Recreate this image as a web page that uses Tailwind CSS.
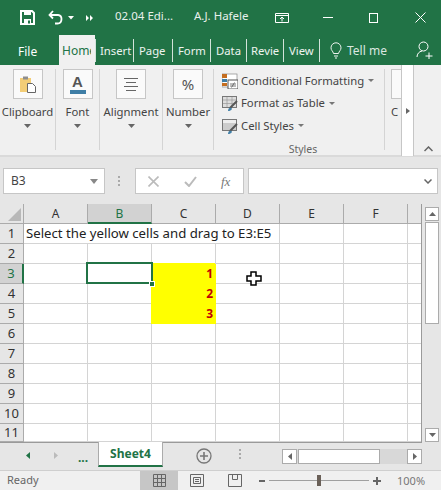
<!DOCTYPE html>
<html><head><meta charset="utf-8"><script src="https://cdn.jsdelivr.net/npm/@tailwindcss/browser@4"></script></head>
<body class="m-0 overflow-hidden">
<div class="relative w-[441px] h-[490px] overflow-hidden bg-[#e6e6e6] flex flex-col font-['Noto_Sans',sans-serif] text-[12px] leading-none text-[#444]">

<!-- title bar -->
<div class="h-[35px] bg-[#217346] text-white flex items-center shrink-0 relative">
  <svg class="ml-[20px] mt-[-1px]" width="15" height="15" viewBox="0 0 15 15"><path d="M1 1h11l2 2v11H1z" fill="none" stroke="#fff" stroke-width="2"/><rect x="4" y="1" width="7" height="4" fill="#fff"/><rect x="4" y="9" width="7" height="5" fill="#fff"/><rect x="8" y="10.5" width="2" height="3" fill="#217346"/></svg>
  <svg class="ml-[13px] mt-[-1px]" width="16" height="15" viewBox="0 0 16 15"><path d="M5 1 1.500 5 5 8.500M2 5h8a4 4 0 0 1 3.500 4c0 3-2 4.500-4 4.500H7" fill="none" stroke="#fff" stroke-width="1.800"/></svg>
  <svg class="ml-[4px]" width="6" height="4" viewBox="0 0 6 4"><path d="M0 0h6L3 3.500z" fill="#fff"/></svg>
  <svg class="ml-[12px]" width="8" height="6" viewBox="0 0 8 6"><path d="M0 0l3 3-3 3zM4 0l3 3-3 3z" fill="#fff"/></svg>
  <span class="ml-[21px] w-[79px] whitespace-nowrap text-[11.5px] text-[#e8f0eb] mt-[-3px]">02.04 Edi...</span>
  <span class="w-[81px] whitespace-nowrap text-[11.5px] text-[#e8f0eb] mt-[-3px]">A.J. Hafele</span>
  <svg width="14" height="10" viewBox="0 0 14 10"><path d="M.5.500h13v9H.5zM.5 2.500h13M7 8.500V4M5 6l2-2 2 2" fill="none" stroke="#fff"/></svg>
  <div class="ml-[34px] w-[10px] h-px bg-white"></div>
  <div class="ml-[36px] w-[9px] h-[10px] border border-white"></div>
  <svg class="ml-[37px]" width="11" height="11" viewBox="0 0 11 11"><path d="M.5.500l10 10M10.500.500l-10 10" stroke="#fff" fill="none"/></svg>
</div>

<!-- tabs -->
<div class="h-[30px] bg-[#217346] text-[#eef4f0] flex items-center shrink-0 relative text-[11.3px]">
  <span class="ml-[18px] w-[41px] text-white pt-[3px] text-[12px]">File</span>
  <div class="w-[36px] h-[30px] bg-[#f0f0f0] text-[#217346] pl-[3px] pt-[10px] text-[12px]"><div class="w-[29px] overflow-hidden whitespace-nowrap">Home</div></div>
  <div class="w-px h-[23px] bg-white/80"></div>
  <span class="w-[37px] pl-[4px] pt-[1px] whitespace-nowrap">Insert</span>
  <div class="w-px h-[23px] bg-white/80"></div>
  <span class="w-[38px] pl-[5px] pt-[1px] whitespace-nowrap">Page</span>
  <div class="w-px h-[23px] bg-white/80"></div>
  <span class="w-[37px] pl-[5px] pt-[1px] whitespace-nowrap">Form</span>
  <div class="w-px h-[23px] bg-white/80"></div>
  <span class="w-[35px] pl-[5px] pt-[1px] whitespace-nowrap">Data</span>
  <div class="w-px h-[23px] bg-white/80"></div>
  <span class="w-[36px] pl-[4px] pt-[1px] whitespace-nowrap">Revie</span>
  <div class="w-px h-[23px] bg-white/80"></div>
  <span class="w-[35px] pl-[5px] pt-[1px] whitespace-nowrap">View</span>
  <div class="w-px h-[23px] bg-white/80"></div>
  <svg class="ml-[10px]" width="12" height="17" viewBox="0 0 12 17"><path d="M3.500 11.500C3 9 1 8.500 1 5.800a5 5 0 0 1 10 0C11 8.500 9 9 8.500 11.500zM4 14h4M5 16h2" fill="none" stroke="#eef4f0"/></svg>
  <span class="ml-[5px] pt-[1px] whitespace-nowrap text-[#dbe7e0] text-[12px]">Tell me</span>
  <svg class="absolute left-[416px] top-[6px]" width="18" height="18" viewBox="0 0 18 18"><circle cx="7.500" cy="5.500" r="4.500" fill="none" stroke="#fff"/><path d="M1 16c0-3 2-5.500 5-6M9.500 15h7M13 11.500v7" fill="none" stroke="#fff"/></svg>
</div>

<!-- ribbon -->
<div class="h-[92px] bg-[#f0f0f0] border-b-2 border-[#dadada] shrink-0 flex relative text-[11.3px]">
  <div class="w-[56px] border-r border-[#d4d4d4] mt-[4px] mb-[5px] flex flex-col items-center">
    <div class="w-[30px] h-[30px] border border-[#c6c6c6] bg-[#fafafa] flex items-center justify-center">
      <svg width="16" height="17" viewBox="0 0 16 17"><path d="M0 2h11v14H0z" fill="#f3cd76"/><rect x="3" y="0.500" width="5" height="3" fill="#8e8e8e"/><path d="M7.500 7.500h5l3 3v6h-8z" fill="#fff" stroke="#666"/></svg>
    </div>
    <span class="mt-[7px] text-[#444] whitespace-nowrap">Clipboard</span>
    <svg class="mt-[7px]" width="7" height="4" viewBox="0 0 7 4"><path d="M0 0h7L3.500 4z" fill="#666"/></svg>
  </div>
  <div class="w-[44px] border-r border-[#d4d4d4] mt-[4px] mb-[5px] flex flex-col items-center">
    <div class="w-[30px] h-[30px] border border-[#c6c6c6] bg-[#fafafa] flex flex-col items-center">
      <span class="font-['Liberation_Sans',sans-serif] font-bold text-[15px] text-[#555] mt-[5px] leading-[14px]">A</span>
      <div class="w-[16px] h-[4px] bg-[#3f7ea6] mt-[1px]"></div>
    </div>
    <span class="mt-[7px]">Font</span>
    <svg class="mt-[7px]" width="7" height="4" viewBox="0 0 7 4"><path d="M0 0h7L3.500 4z" fill="#666"/></svg>
  </div>
  <div class="w-[63px] border-r border-[#d4d4d4] mt-[4px] mb-[5px] flex flex-col items-center">
    <div class="w-[30px] h-[30px] border border-[#c6c6c6] bg-[#fafafa] flex flex-col items-center justify-center gap-[3px]">
      <div class="w-[14px] h-px bg-[#666]"></div><div class="w-[10px] h-px bg-[#666]"></div><div class="w-[14px] h-px bg-[#666]"></div><div class="w-[10px] h-px bg-[#666]"></div>
    </div>
    <span class="mt-[7px]">Alignment</span>
    <svg class="mt-[7px]" width="7" height="4" viewBox="0 0 7 4"><path d="M0 0h7L3.500 4z" fill="#666"/></svg>
  </div>
  <div class="w-[51px] border-r border-[#d4d4d4] mt-[4px] mb-[5px] flex flex-col items-center">
    <div class="w-[30px] h-[30px] border border-[#c6c6c6] bg-[#fafafa] flex items-center justify-center">
      <span class="text-[15px] text-[#555]">%</span>
    </div>
    <span class="mt-[7px]">Number</span>
    <svg class="mt-[7px]" width="7" height="4" viewBox="0 0 7 4"><path d="M0 0h7L3.500 4z" fill="#666"/></svg>
  </div>
  <div class="w-[171px] border-r border-[#d4d4d4] mt-[4px] mb-[5px] flex flex-col pl-[8px]">
    <div class="flex items-center h-[23px] shrink-0">
      <svg width="16" height="16" viewBox="0 0 16 16"><rect x="0" y="1" width="15" height="13" fill="#fff" stroke="#888" stroke-width=".7"/><rect x="0" y="1" width="5" height="4" fill="#c46d1f"/><rect x="0" y="6" width="5" height="3" fill="#3f7ea6"/><rect x="0" y="10" width="5" height="3" fill="#c46d1f"/><rect x="6" y="7" width="10" height="9" fill="#fff" stroke="#555"/><path d="M8 11h6M8 13h6M12.500 9.500l-3 5" stroke="#555" stroke-width=".8"/></svg>
      <span class="ml-[3px] text-[#444] whitespace-nowrap">Conditional Formatting</span>
      <svg class="ml-[4px]" width="6" height="3" viewBox="0 0 6 3"><path d="M0 0h6L3 3z" fill="#777"/></svg>
    </div>
    <div class="flex items-center h-[22px] shrink-0">
      <svg width="16" height="16" viewBox="0 0 16 16"><rect x=".5" y="1.500" width="14" height="11" fill="#ddd" stroke="#777"/><path d="M5 2v10M10 2v10M1 5h13M1 8.500h13" stroke="#999" stroke-width=".7"/><path d="M15 6 8 13" stroke="#555" stroke-width="2"/><path d="M6 16c0-3 2-4 3.500-3 1 1-.5 3-3.500 3z" fill="#3f7ea6"/></svg>
      <span class="ml-[3px] whitespace-nowrap">Format as Table</span>
      <svg class="ml-[4px]" width="6" height="3" viewBox="0 0 6 3"><path d="M0 0h6L3 3z" fill="#777"/></svg>
    </div>
    <div class="flex items-center h-[23px] shrink-0">
      <svg width="16" height="16" viewBox="0 0 16 16"><rect x=".5" y="1.500" width="14" height="11" fill="#ccc" stroke="#777"/><rect x="1" y="2" width="13" height="3" fill="#eee"/><path d="M15 6 8 13" stroke="#555" stroke-width="2"/><path d="M6 16c0-3 2-4 3.500-3 1 1-.5 3-3.500 3z" fill="#3f7ea6"/></svg>
      <span class="ml-[3px] whitespace-nowrap">Cell Styles</span>
      <svg class="ml-[4px]" width="6" height="3" viewBox="0 0 6 3"><path d="M0 0h6L3 3z" fill="#777"/></svg>
    </div>
    <span class="self-center shrink-0 mt-[7px] text-[10.5px] text-[#666]">Styles</span>
  </div>
  <div class="w-[18px] mt-[4px] ml-[6px] flex flex-col overflow-hidden">
    <div class="w-[18px] h-[30px] border border-[#c6c6c6] bg-[#fafafa]"></div>
    <span class="mt-[7px]">C</span>
  </div>
  <div class="absolute left-[401px] top-0 w-[13px] h-[91px] bg-white border-x border-[#c6c6c6] flex items-center justify-center">
    <svg width="4" height="6" viewBox="0 0 4 6"><path d="M0 0l4 3-4 3z" fill="#666"/></svg>
  </div>
  <svg class="absolute left-[424px] top-[81px]" width="9" height="6" viewBox="0 0 9 6"><path d="M.5 5 4.500 1l4 4" fill="none" stroke="#666" stroke-width="1.500"/></svg>
</div>

<!-- formula bar -->
<div class="h-[47px] bg-[#e6e6e6] shrink-0 flex items-start pt-[11px] pl-[3px]">
  <div class="w-[102px] h-[26px] border border-[#c6c6c6] bg-white flex items-center pl-[7px] pr-[6px] justify-between text-[12px]">
    <span>B3</span>
    <svg width="8" height="5" viewBox="0 0 8 5"><path d="M0 0h8L4 5z" fill="#888"/></svg>
  </div>
  <div class="w-[15px] h-[26px] ml-[6px] mr-[9px] flex flex-col items-center justify-center gap-[2px]"><i class="block w-[2px] h-[2px] bg-[#aaa]"></i><i class="block w-[2px] h-[2px] bg-[#aaa]"></i><i class="block w-[2px] h-[2px] bg-[#aaa]"></i></div>
  <div class="w-[109px] h-[26px] border border-[#c6c6c6] bg-white flex items-center">
    <svg class="ml-[12px]" width="11" height="11" viewBox="0 0 11 11"><path d="M.5.500l10 10M10.500.500l-10 10" stroke="#bbb" stroke-width="1.600" fill="none"/></svg>
    <svg class="ml-[25px]" width="13" height="11" viewBox="0 0 13 11"><path d="M1 6l4 4 7-9" stroke="#bbb" stroke-width="2" fill="none"/></svg>
    <span class="ml-[24px] font-['Liberation_Serif',serif] italic text-[13px] text-[#777]">fx</span>
  </div>
  <div class="w-[190px] h-[26px] ml-[4px] border border-[#c6c6c6] bg-white flex items-center justify-end pr-[5px]">
    <svg width="8" height="5" viewBox="0 0 8 5"><path d="M.5.500 4 4 7.500.500" stroke="#666" stroke-width="1.500" fill="none"/></svg>
  </div>
</div>

<!-- grid area -->
<div class="h-[239px] shrink-0 flex relative">
  <div class="w-[422px] h-[239px] relative overflow-hidden border-r border-b border-[#9a9a9a]">
    <div class="grid grid-cols-[24px_repeat(6,64px)_13px] grid-rows-[20px_repeat(10,20px)_18px] bg-white text-[12px] text-[#333]">
      <!-- header -->
      <div class="bg-[#e6e6e6] border-r border-b border-[#ababab] flex items-end justify-end p-[2px]"><svg width="13" height="13" viewBox="0 0 13 13"><path d="M13 0v13H0z" fill="#b8b8b8"/></svg></div>
      <div class="bg-[#e6e6e6] border-r border-b border-[#ababab] flex items-center justify-center pt-[1px]">A</div>
      <div class="bg-[#d2d2d2] border-r border-b-2 border-b-[#217346] border-r-[#ababab] flex items-center justify-center text-[#217346] pt-[1px]">B</div>
      <div class="bg-[#e6e6e6] border-r border-b border-[#ababab] flex items-center justify-center pt-[1px]">C</div>
      <div class="bg-[#e6e6e6] border-r border-b border-[#ababab] flex items-center justify-center pt-[1px]">D</div>
      <div class="bg-[#e6e6e6] border-r border-b border-[#ababab] flex items-center justify-center pt-[1px]">E</div>
      <div class="bg-[#e6e6e6] border-r border-b border-[#ababab] flex items-center justify-center pt-[1px]">F</div>
      <div class="bg-[#e6e6e6] border-b border-[#ababab]"></div>
      <!-- rows -->
      <div class="contents [&>div]:border-r [&>div]:border-b [&>div]:border-[#d4d4d4]">
        <div class="bg-[#e6e6e6] !border-[#ababab] flex items-center justify-center text-[13px]">1</div><div class="!border-r-0 flex items-center pl-[2px] whitespace-nowrap text-[13.2px] text-[#222] overflow-visible">Select the yellow cells and drag to E3:E5</div><div class="!border-r-0"></div><div class="!border-r-0"></div><div></div><div></div><div></div><div class="!border-r-0"></div>
        <div class="bg-[#e6e6e6] !border-[#ababab] flex items-center justify-center text-[13px]">2</div><div></div><div></div><div></div><div></div><div></div><div></div><div class="!border-r-0"></div>
        <div class="bg-[#d2d2d2] !border-[#ababab] !border-r-2 !border-r-[#217346] flex items-center justify-center text-[13px] text-[#217346]">3</div><div></div><div></div><div class="bg-[#ffff00] !border-[#ffff00] shadow-[-1px_-1px_0_#ffff00] flex items-center justify-end pr-[2px] font-bold text-[#c00000]">1</div><div></div><div></div><div></div><div class="!border-r-0"></div>
        <div class="bg-[#e6e6e6] !border-[#ababab] flex items-center justify-center text-[13px]">4</div><div></div><div></div><div class="bg-[#ffff00] !border-[#ffff00] shadow-[-1px_0_0_#ffff00] flex items-center justify-end pr-[2px] font-bold text-[#c00000]">2</div><div></div><div></div><div></div><div class="!border-r-0"></div>
        <div class="bg-[#e6e6e6] !border-[#ababab] flex items-center justify-center text-[13px]">5</div><div></div><div></div><div class="bg-[#ffff00] !border-[#ffff00] shadow-[-1px_0_0_#ffff00] flex items-center justify-end pr-[2px] font-bold text-[#c00000]">3</div><div></div><div></div><div></div><div class="!border-r-0"></div>
        <div class="bg-[#e6e6e6] !border-[#ababab] flex items-center justify-center text-[13px]">6</div><div></div><div></div><div></div><div></div><div></div><div></div><div class="!border-r-0"></div>
        <div class="bg-[#e6e6e6] !border-[#ababab] flex items-center justify-center text-[13px]">7</div><div></div><div></div><div></div><div></div><div></div><div></div><div class="!border-r-0"></div>
        <div class="bg-[#e6e6e6] !border-[#ababab] flex items-center justify-center text-[13px]">8</div><div></div><div></div><div></div><div></div><div></div><div></div><div class="!border-r-0"></div>
        <div class="bg-[#e6e6e6] !border-[#ababab] flex items-center justify-center text-[13px]">9</div><div></div><div></div><div></div><div></div><div></div><div></div><div class="!border-r-0"></div>
        <div class="bg-[#e6e6e6] !border-[#ababab] flex items-center justify-center text-[13px]">10</div><div></div><div></div><div></div><div></div><div></div><div></div><div class="!border-r-0"></div>
        <div class="bg-[#e6e6e6] !border-[#ababab] flex items-center justify-center text-[13px]">11</div><div></div><div></div><div></div><div></div><div></div><div></div><div class="!border-r-0"></div>
      </div>
    </div>
    <!-- selection -->
    <div class="absolute left-[86px] top-[58px] w-[67px] h-[22px] border-2 border-[#217346]"></div>
    <div class="absolute left-[149px] top-[77px] w-[6px] h-[6px] bg-[#217346] border border-white"></div>
    <!-- cursor -->
    <svg class="absolute left-[246px] top-[67px]" width="16" height="16" viewBox="0 0 16 16"><path d="M5 1h5v4h5v5h-5v4H5v-4H1V5h4z" fill="#fff" stroke="#000" stroke-width="1.500"/></svg>
  </div>
  <!-- vertical scrollbar -->
  <div class="flex-1 flex flex-col items-end pr-[2px] pt-[3px] pb-[1px]">
    <div class="w-[14px] h-[14px] bg-white border border-[#ababab] flex items-center justify-center"><svg width="7" height="4" viewBox="0 0 7 4"><path d="M0 4h7L3.500 0z" fill="#666"/></svg></div>
    <div class="w-[14px] h-[102px] mt-[1px] bg-white border border-[#ababab]"></div>
    <div class="flex-1"></div>
    <div class="w-[14px] h-[14px] bg-white border border-[#ababab] flex items-center justify-center"><svg width="7" height="4" viewBox="0 0 7 4"><path d="M0 0h7L3.500 4z" fill="#666"/></svg></div>
  </div>
</div>

<!-- sheet tabs -->
<div class="h-[27px] shrink-0 bg-[#e6e6e6] flex relative">
  <svg class="ml-[26px] mt-[9px]" width="4" height="7" viewBox="0 0 4 7"><path d="M4 0v7L0 3.500z" fill="#217346"/></svg>
  <svg class="ml-[24px] mt-[9px]" width="4" height="7" viewBox="0 0 4 7"><path d="M0 0v7l4-3.500z" fill="#bbb"/></svg>
  <span class="ml-[20px] w-[8px] mt-[9px] font-bold text-[#217346]">...</span>
  <div class="ml-[12px] w-[65px] h-[25px] -mt-px bg-white border-x border-b-2 border-x-[#ababab] border-b-[#217346] flex items-center justify-center font-bold text-[#217346] text-[12px]">Sheet4</div>
  <svg class="ml-[33px] mt-[5px]" width="16" height="16" viewBox="0 0 16 16"><circle cx="8" cy="8" r="7" fill="none" stroke="#777" stroke-width="1.300"/><path d="M4 8h8M8 4v8" stroke="#777" stroke-width="1.600"/></svg>
  <div class="ml-[27px] mt-[6px] flex flex-col gap-[2px]"><i class="block w-[2px] h-[2px] bg-[#aaa]"></i><i class="block w-[2px] h-[2px] bg-[#aaa]"></i><i class="block w-[2px] h-[2px] bg-[#aaa]"></i></div>
  <div class="absolute left-[282px] top-[6px] w-[140px] h-[15px] flex bg-[#d8d8d8]">
    <div class="w-[15px] border border-[#ababab] bg-white flex items-center justify-center"><svg width="4" height="7" viewBox="0 0 4 7"><path d="M4 0v7L0 3.500z" fill="#666"/></svg></div>
    <div class="w-[82px] ml-px border border-[#ababab] bg-white"></div>
    <div class="flex-1"></div>
    <div class="w-[15px] border border-[#ababab] bg-white flex items-center justify-center"><svg width="4" height="7" viewBox="0 0 4 7"><path d="M0 0v7l4-3.500z" fill="#666"/></svg></div>
  </div>
</div>

<!-- status bar -->
<div class="h-[20px] shrink-0 bg-[#f0f0f0] border-t border-[#cfcfcf] flex items-center relative text-[#666] text-[11px]">
  <span class="ml-[7px] mt-[-2px]">Ready</span>
  <div class="absolute left-[140px] top-0 w-[38px] h-[19px] bg-[#c6c6c6] flex items-center justify-center"><svg width="13" height="13" viewBox="0 0 13 13"><path d="M.5.500h12v12H.5zM4.500.500v12M8.500.500v12M.5 4.500h12M.5 8.500h12" fill="none" stroke="#666"/></svg></div>
  <svg class="absolute left-[190px] top-[3px]" width="14" height="13" viewBox="0 0 14 13"><path d="M.5.500h13v12H.5zM3.500 3.500h7v6h-7zM5 5.500h4M5 7.500h4" fill="none" stroke="#666"/></svg>
  <svg class="absolute left-[228px] top-[3px]" width="14" height="13" viewBox="0 0 14 13"><path d="M.5 12.500v-12h13v12zM4.500.500v5h5v-5" fill="none" stroke="#666"/></svg>
  <div class="absolute left-[259px] top-[9px] w-[6px] h-[2px] bg-[#666]"></div>
  <div class="absolute left-[269px] top-[9px] w-[100px] h-px bg-[#a0a0a0]"></div>
  <div class="absolute left-[317px] top-[4px] w-[4px] h-[11px] bg-[#6a6058]"></div>
  <div class="absolute left-[373px] top-[9px] w-[8px] h-[2px] bg-[#666]"></div>
  <div class="absolute left-[376px] top-[6px] w-[2px] h-[8px] bg-[#666]"></div>
  <span class="absolute left-[397px] top-[4px] text-[#777]">100%</span>
</div>
</div>
</body></html>
